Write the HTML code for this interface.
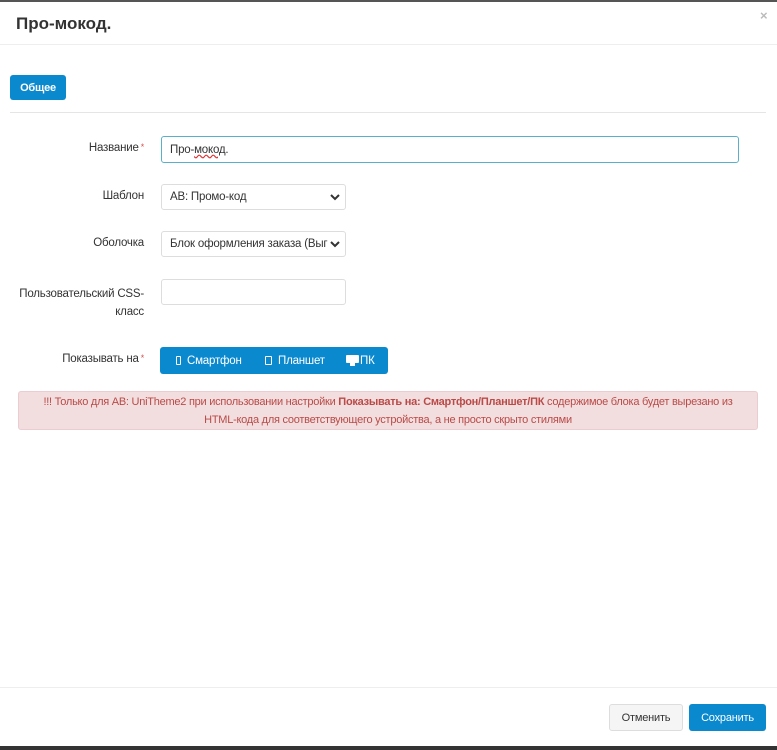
<!DOCTYPE html>
<html><head><meta charset="utf-8"><style>
*{box-sizing:border-box;margin:0;padding:0}
body{width:777px;height:750px;background:#fff;font-family:"Liberation Sans",Arial,sans-serif;font-size:12px;color:#333;position:relative;overflow:hidden}
.abs{position:absolute}
.lbl{position:absolute;text-align:right;width:144px;left:0;font-size:11.5px;color:#333;letter-spacing:-0.2px}
.req{color:#d9534f;font-size:9px;vertical-align:top;margin-left:2px}
.inp{position:absolute;border:1px solid #ddd;border-radius:3px;background:#fff;height:26px;font-size:11.5px;padding:0 8px;line-height:25px;color:#333;letter-spacing:-0.2px}
.chev{position:absolute;right:5px;top:7px;background:#fff}
.btn{position:absolute;text-align:center;font-size:11px;letter-spacing:-0.2px;border-radius:3px}
</style></head><body>
<div class="abs" style="left:0;top:0;width:777px;height:2px;background:#555"></div>
<div class="abs" style="left:0;top:746px;width:777px;height:4px;background:#333"></div>
<div class="abs" style="left:16px;top:14px;font-size:17px;font-weight:bold;color:#333">Про-мокод.</div>
<div class="abs" style="left:760px;top:8px;font-size:13px;color:#bbb;font-weight:bold">×</div>
<div class="abs" style="left:0;top:44px;width:777px;height:1px;background:#eee"></div>
<div class="btn" style="left:10px;top:75px;width:56px;height:25px;background:#0b89cf;color:#fff;font-weight:bold;line-height:26px">Общее</div>
<div class="abs" style="left:10px;top:112px;width:756px;height:1px;background:#e5e5e5"></div>

<div class="lbl" style="top:142px">Название<span class="req">*</span></div>
<div class="inp" style="left:161px;top:136px;width:578px;height:27px;border-color:#5ab0c9;line-height:26px">Про-<span style="text-decoration:underline wavy #d33">мокод</span>.</div>

<div class="lbl" style="top:190px">Шаблон</div>
<div class="inp" style="left:161px;top:184px;width:185px">АВ: Промо-код<svg class="chev" width="10" height="10" viewBox="0 0 10 10"><path d="M1 3l4 4 4-4" stroke="#333" stroke-width="2" fill="none"/></svg></div>

<div class="lbl" style="top:237px">Оболочка</div>
<div class="inp" style="left:161px;top:231px;width:185px;white-space:nowrap;overflow:hidden">Блок оформления заказа (Выг<svg class="chev" width="10" height="10" viewBox="0 0 10 10"><path d="M1 3l4 4 4-4" stroke="#333" stroke-width="2" fill="none"/></svg></div>

<div class="lbl" style="top:285px;line-height:18px">Пользовательский CSS-<br>класс</div>
<div class="inp" style="left:161px;top:279px;width:185px"></div>

<div class="lbl" style="top:353px">Показывать на<span class="req">*</span></div>
<div class="abs" style="left:160px;top:347px;width:228px;height:27px;background:#0b89cf;border-radius:3px;color:#fff;font-size:11.5px;line-height:28px;letter-spacing:-0.2px">
<span class="abs" style="left:16px;top:9px;width:5px;height:9px;border:1.5px solid #fff;border-radius:1px"></span><span class="abs" style="left:27px">Смартфон</span>
<span class="abs" style="left:105px;top:9px;width:7px;height:9px;border:1.5px solid #fff;border-radius:1px"></span><span class="abs" style="left:118px">Планшет</span>
<span class="abs" style="left:186px;top:8px;width:13px;height:8px;background:#fff;border-radius:1px"></span><span class="abs" style="left:190px;top:16px;width:5px;height:3px;background:#fff"></span><span class="abs" style="left:200px">ПК</span>
</div>

<div class="abs" style="left:18px;top:391px;width:740px;height:39px;background:#f2dede;border:1px solid #ebccd1;border-radius:3px;color:#b94a48;font-size:11px;letter-spacing:-0.25px;text-align:center;line-height:18px;padding-top:1px;white-space:nowrap">!!! Только для АВ: UniTheme2 при использовании настройки <b>Показывать на: Смартфон/Планшет/ПК</b> содержимое блока будет вырезано из<br>HTML-кода для соответствующего устройства, а не просто скрыто стилями</div>

<div class="abs" style="left:0;top:687px;width:777px;height:1px;background:#eee"></div>
<div class="btn" style="left:609px;top:704px;width:74px;height:27px;background:#f5f5f5;border:1px solid #ddd;line-height:26px;color:#333">Отменить</div>
<div class="btn" style="left:689px;top:704px;width:77px;height:27px;background:#0b89cf;line-height:28px;color:#fff">Сохранить</div>
</body></html>
